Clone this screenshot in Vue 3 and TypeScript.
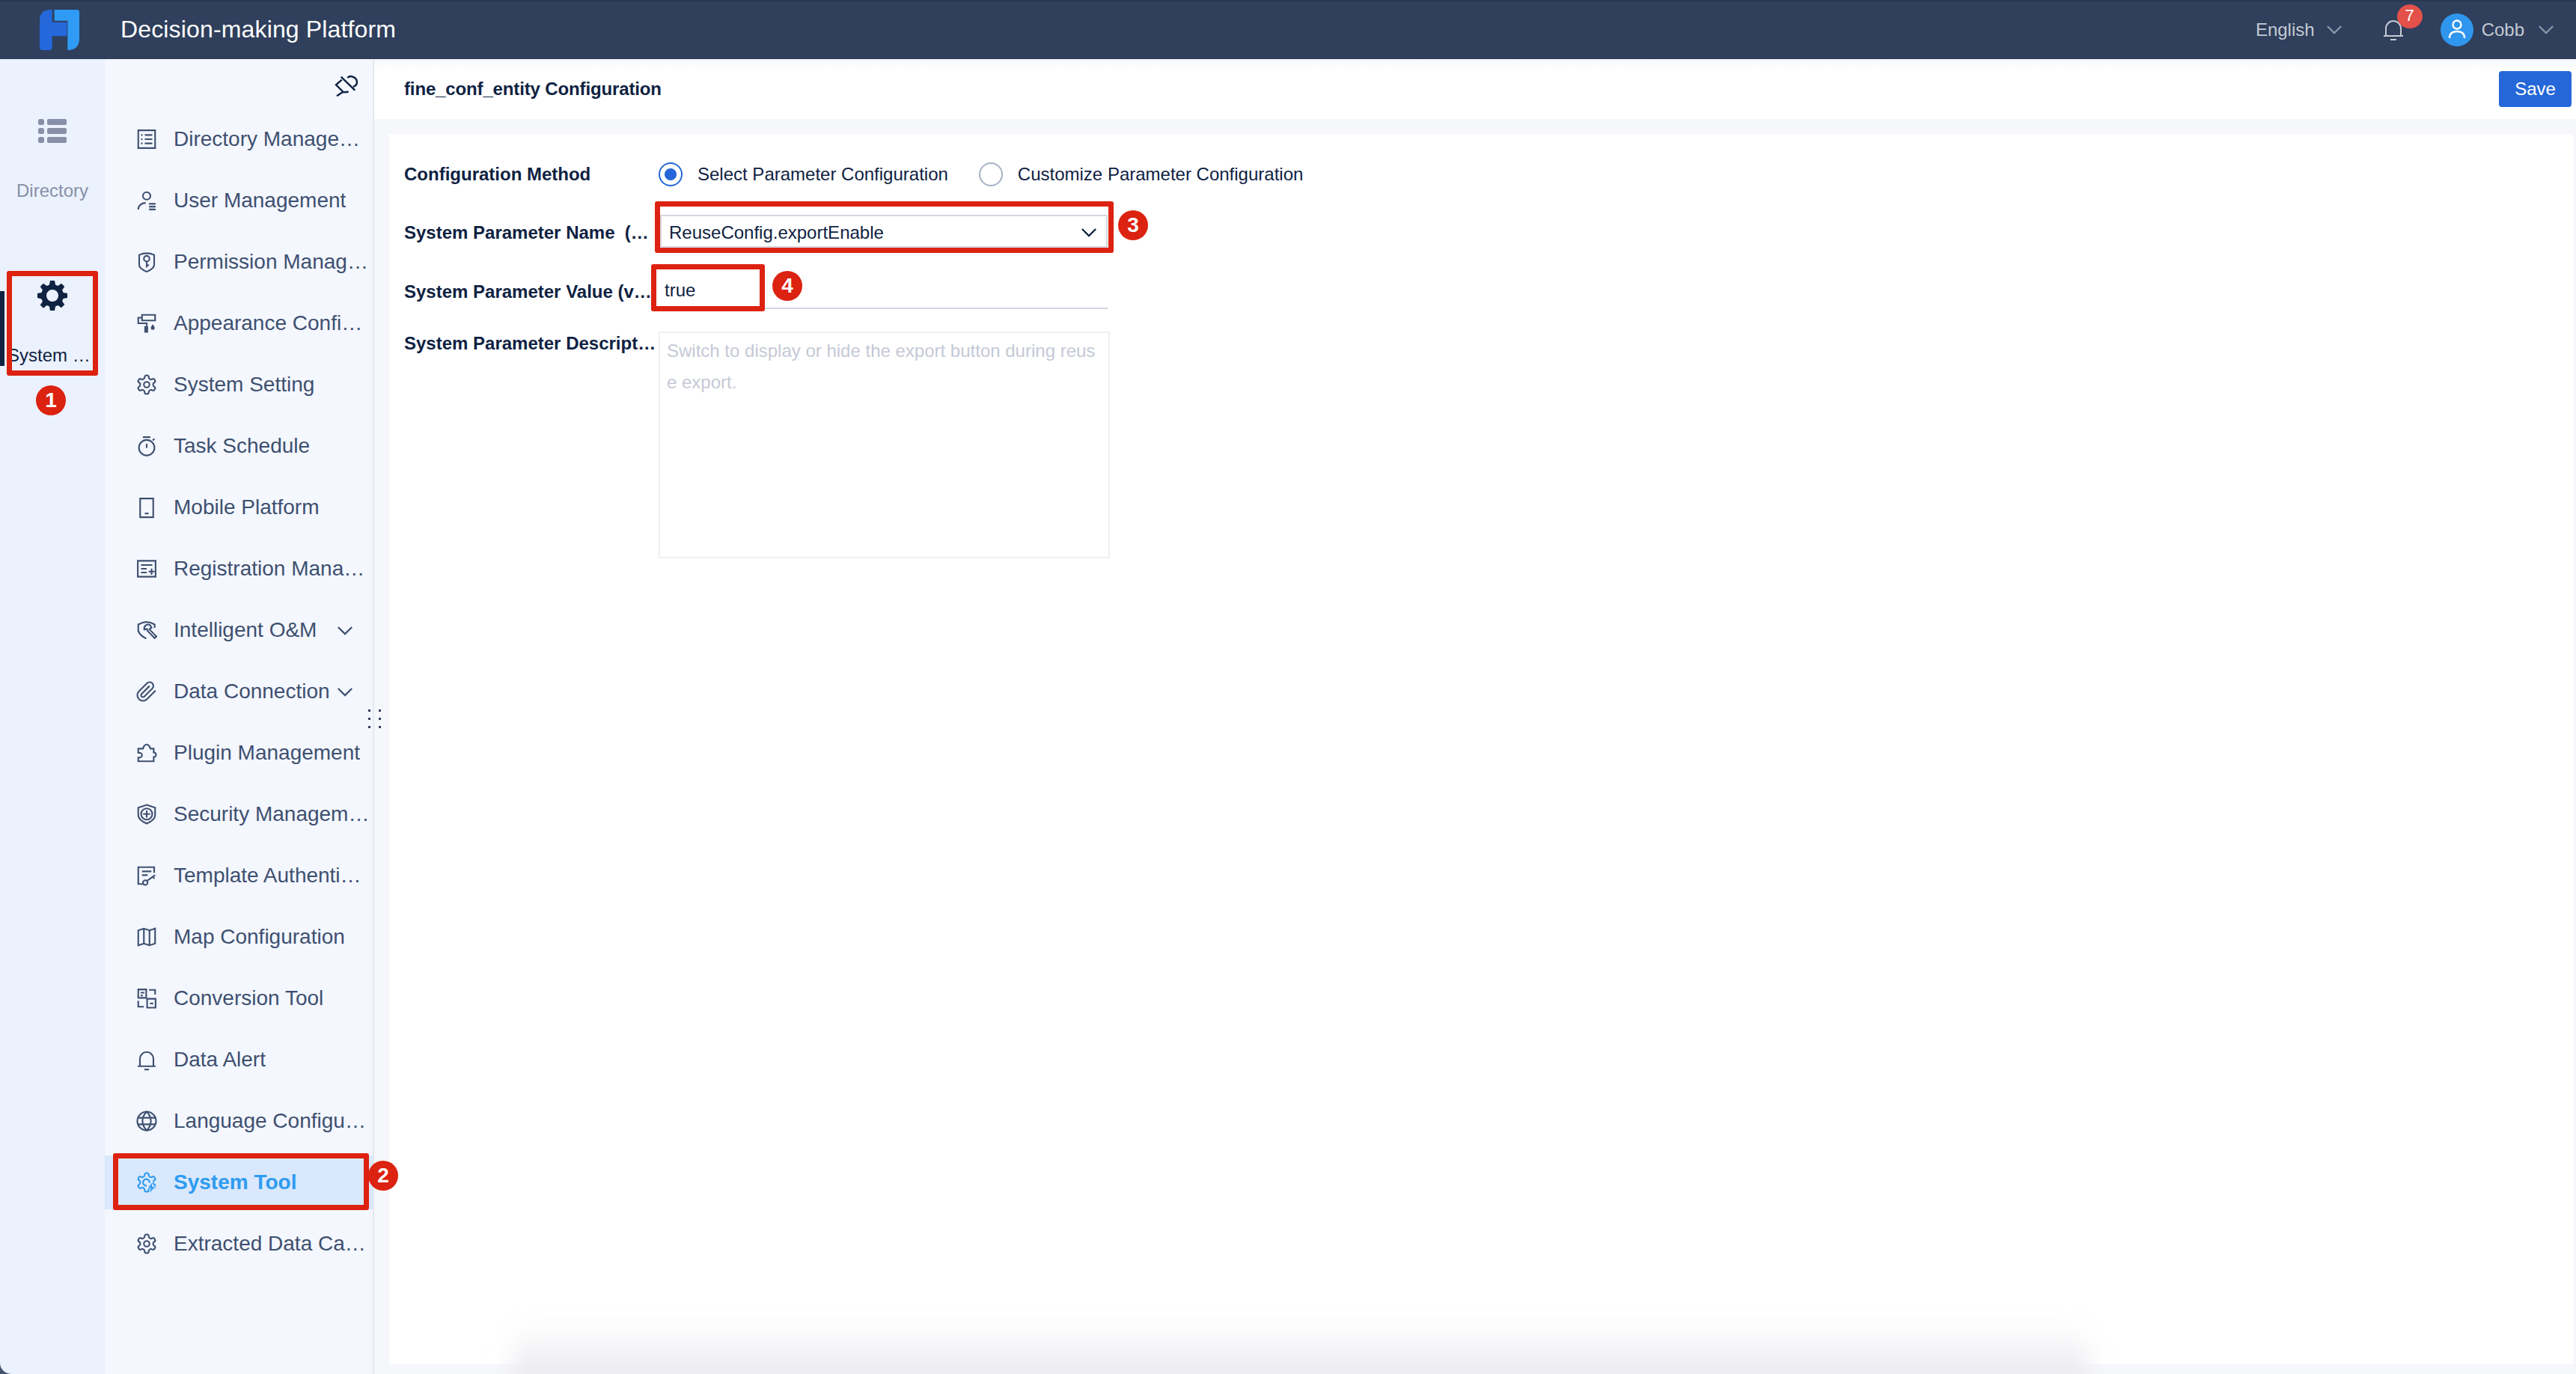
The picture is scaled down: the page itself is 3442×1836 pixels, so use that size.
<script setup lang="ts">
interface NavItem {
    label: string;
    paths: string[];
    solid?: string;
    chevron?: boolean;
    active?: boolean;
}

const gear =
    'M12.22 2h-.44a2 2 0 0 0-2 2v.18a2 2 0 0 1-1 1.73l-.43.25a2 2 0 0 1-2 0l-.15-.08a2 2 0 0 0-2.73.73l-.22.38a2 2 0 0 0 .73 2.73l.15.1a2 2 0 0 1 1 1.72v.51a2 2 0 0 1-1 1.74l-.15.09a2 2 0 0 0-.73 2.73l.22.38a2 2 0 0 0 2.73.73l.15-.08a2 2 0 0 1 2 0l.43.25a2 2 0 0 1 1 1.73V20a2 2 0 0 0 2 2h.44a2 2 0 0 0 2-2v-.18a2 2 0 0 1 1-1.73l.43-.25a2 2 0 0 1 2 0l.15.08a2 2 0 0 0 2.73-.73l.22-.39a2 2 0 0 0-.73-2.73l-.15-.08a2 2 0 0 1-1-1.74v-.5a2 2 0 0 1 1-1.74l.15-.09a2 2 0 0 0 .73-2.73l-.22-.38a2 2 0 0 0-2.73-.73l-.15.08a2 2 0 0 1-2 0l-.43-.25a2 2 0 0 1-1-1.73V4a2 2 0 0 0-2-2z';
const gearHole = 'M12 9a3 3 0 1 0 0 6 3 3 0 0 0 0-6z';

const navItems: NavItem[] = [
    {
        label: 'Directory Management',
        paths: ['M3 2.5h18v19H3z', 'M10 7.5h8M10 12h8M10 16.5h8M6 7.5h1.6M6 12h1.6M6 16.5h1.6'],
    },
    {
        label: 'User Management',
        paths: ['M12 3a4 4 0 1 0 0 8 4 4 0 0 0 0-8z', 'M3 21.5C3 17 7 14.5 11 14.5', 'M14.5 15.5h7M14.5 18.5h7M14.5 21.5h7'],
    },
    {
        label: 'Permission Management',
        paths: ['M4 4.5Q12 1 20 4.5V15Q20 19 12 22.5 4 19 4 15z', 'M12 5.5a3 3 0 1 0 0 6 3 3 0 0 0 0-6zM12 11.5V18M12 15.5h2.5'],
    },
    {
        label: 'Appearance Configuration',
        paths: ['M7 3h14v6H7zM7 6H3v6h9v3'],
        solid: 'M9.5 15h4v7h-4zM18.5 13c-1.5 2-2 3-2 4a2 2 0 0 0 4 0c0-1-.5-2-2-4z',
    },
    { label: 'System Setting', paths: [gear, gearHole] },
    {
        label: 'Task Schedule',
        paths: ['M12 5.5a8.3 8.3 0 1 0 0 16.6 8.3 8.3 0 0 0 0-16.6z', 'M8 2.5h8M12 9.5V14M18.5 6l1.8-1.8'],
    },
    { label: 'Mobile Platform', paths: ['M5 2.5h14v20H5z', 'M10 18.5h4'] },
    {
        label: 'Registration Management',
        paths: ['M2.5 3.5h19v17h-19z', 'M6 8h12M6 12h6M6 16h6M14 15h6.5M17.2 11.7v6.6'],
    },
    {
        label: 'Intelligent O&M',
        chevron: true,
        paths: [
            'M20.5 9.5V6Q12 .5 3 6v7q2 5 8.5 8',
            'M15.5 6.5a4.2 4.2 0 0 0-6 4.8l2.8-.6.8 2.2 7.4 7.6 1.8-1.8-7.4-7.6 2.3-1.8z',
        ],
    },
    {
        label: 'Data Connection',
        chevron: true,
        paths: ['m21.44 11.05-9.19 9.19a6 6 0 0 1-8.49-8.49l8.57-8.57A4 4 0 1 1 18 8.84l-8.59 8.57a2 2 0 0 1-2.83-2.83l8.49-8.48'],
    },
    {
        label: 'Plugin Management',
        paths: ['M3 7.5h5L9 5Q12 1 15 5l1 2.5h3.5v4a2.5 2.5 0 0 1 0 5V21H3v-4h1.5a2.5 2.5 0 0 0 0-5H3z'],
    },
    {
        label: 'Security Management',
        paths: ['M12 2l9 3v8q0 5-9 9-9-4-9-9V5z', 'M12 8v7.5M8.2 11.8h7.6M12 5.8a6 6 0 1 0 0 12 6 6 0 0 0 0-12z'],
    },
    {
        label: 'Template Authentication',
        paths: ['M20 9V3H3v18h5', 'M7 7.5h10M7 11.5h6', 'M10.5 17a2.5 2.5 0 1 0 0 5 2.5 2.5 0 0 0 0-5zM12.5 17.5l8.5-6M18.5 13.3l1.8 2'],
    },
    { label: 'Map Configuration', paths: ['M3 5l6-2 6 2 6-2v16l-6 2-6-2-6 2z', 'M9 3v16M15 5v16'] },
    {
        label: 'Conversion Tool',
        paths: ['M3 2.5h8.5v9H3z', 'M5.5 6h4M5.5 9H8', 'M14.5 3H21v5M3 14.5V21h6', 'M12.5 12.5h9V22h-9z', 'M15.500 17.5H19'],
    },
    { label: 'Data Alert', paths: ['M2.5 19h19M4.8 19v-8a7.2 7.2 0 0 1 14.4 0v8', 'M9.5 22.5h5'] },
    {
        label: 'Language Configuration',
        paths: ['M12 2a10 10 0 1 0 0 20 10 10 0 0 0 0-20z', 'M12 2c-6 6-6 14 0 20 6-6 6-14 0-20zM2.5 8.5h19M2.5 15.5h19'],
    },
    {
        label: 'System Tool',
        active: true,
        paths: [gear, 'M15 12.5a3.5 3.5 0 1 0-3 3'],
        solid: 'M18 12l-4.5 6h3l-1 5 5-6.5h-3z',
    },
    { label: 'Extracted Data Cache', paths: [gear, gearHole] },
];
</script>

<template>
    <div class="page">
        <header class="top">
            <svg class="logo" viewBox="0 0 56 57">
                <path fill="#2468dc" d="M17 1v17h20v19H17v15q0 4-4 4H4q-4 0-4-4V16Q0 1 15 1z" />
                <path fill="#2f9bf5" d="M20 1h31q3 0 3 3v36q0 16-16 16V16H20z" />
            </svg>
            <span class="title">Decision-making Platform</span>
            <div class="top-right">
                <span class="lang">English</span>
                <svg class="top-chev" viewBox="0 0 24 14"><path d="M2 2l10 10L22 2" /></svg>
                <div class="bell">
                    <svg viewBox="0 0 28 30">
                        <path d="M1 23h26M4 23V13a10 10 0 0 1 20 0v10" />
                        <path d="M10 28h8" />
                    </svg>
                    <span class="bell-count">7</span>
                </div>
                <svg class="avatar" viewBox="0 0 44 44">
                    <circle cx="22" cy="22" r="22" fill="#2f96ee" />
                    <circle cx="22" cy="15" r="5.5" />
                    <path d="M12 33c0-6 4-9 10-9s10 3 10 9" />
                </svg>
                <span class="user">Cobb</span>
                <svg class="top-chev user-chev" viewBox="0 0 24 14"><path d="M2 2l10 10L22 2" /></svg>
            </div>
        </header>

        <div class="body">
            <aside class="rail">
                <div class="rail-item">
                    <svg class="rail-icon" viewBox="0 0 38 32">
                        <rect x="0" y="0" width="8" height="8" rx="2.5" fill="#8790a8" />
                        <rect x="12" y="0" width="26" height="8" rx="2" fill="#8790a8" />
                        <rect x="0" y="12" width="8" height="8" rx="2.5" fill="#8790a8" />
                        <rect x="12" y="12" width="26" height="8" rx="2" fill="#8790a8" />
                        <rect x="0" y="24" width="8" height="8" rx="2.5" fill="#8790a8" />
                        <rect x="12" y="24" width="26" height="8" rx="2" fill="#8790a8" />
                    </svg>
                    <span class="rail-label">Directory</span>
                </div>
                <div class="rail-item rail-active">
                    <i class="rail-bar"></i>
                    <svg class="rail-icon" viewBox="0 0 40 40">
                        <path
                            fill="#0f2242"
                            fill-rule="evenodd"
                            d="M17 0h6l1 5.5 3.5 1.5 4.5-3.2 4.3 4.3-3.200 4.400 1.500 3.500 5.700 1v6l-5.700 1-1.500 3.500 3.200 4.500-4.300 4.300-4.500-3.200-3.500 1.500-1 5.900h-6l-1-5.900-3.500-1.500L8 36.800 3.700 32.500 6.900 28l-1.500-3.500L0 23v-6l5.400-1 1.500-3.500L3.700 8.100 8 3.800 12.500 7 16 5.500zM20 12a8 8 0 1 0 0 16 8 8 0 0 0 0-16z"
                        />
                    </svg>
                    <span class="rail-label">System Management</span>
                </div>
            </aside>

            <nav class="nav">
                <div class="pin-row">
                    <svg class="pin" viewBox="0 0 31 31">
                        <path
                            d="M9.7 6.7L2 13.3 12 23.3 18.7 22.7M11 23L3 28.300M8.7 2.7L27.3 20.7M17.3 4C21 0 30 3 30 10 30 14 27 15 25 16"
                        />
                    </svg>
                </div>
                <div
                    v-for="item in navItems"
                    :key="item.label"
                    class="nav-item"
                    :class="{ 'nav-active': item.active }"
                >
                    <svg class="nav-icon" viewBox="0 0 24 24">
                        <path v-for="d in item.paths" :key="d" :d="d" />
                        <path v-if="item.solid" class="nav-solid" :d="item.solid" />
                    </svg>
                    <span class="nav-label">{{ item.label }}</span>
                    <svg v-if="item.chevron" class="nav-chev" viewBox="0 0 24 14">
                        <path d="M2 2l10 10L22 2" />
                    </svg>
                </div>
                <div class="drag">
                    <i v-for="n in 6" :key="n"></i>
                </div>
            </nav>

            <main class="main">
                <div class="bar">
                    <span class="bar-title">fine_conf_entity Configuration</span>
                    <button class="save">Save</button>
                </div>
                <section class="card">
                    <div class="row row-method">
                        <label class="field-label">Configuration Method</label>
                        <div class="radios">
                            <span class="radio radio-on"></span>
                            <span class="radio-text">Select Parameter Configuration</span>
                            <span class="radio"></span>
                            <span class="radio-text">Customize Parameter Configuration</span>
                        </div>
                    </div>
                    <div class="row row-name">
                        <label class="field-label">System Parameter Name&nbsp; (key)</label>
                        <div class="select">
                            <span>ReuseConfig.exportEnable</span>
                            <svg class="select-chev" viewBox="0 0 24 14"><path d="M2 2l10 10L22 2" /></svg>
                        </div>
                    </div>
                    <div class="row row-value">
                        <label class="field-label">System Parameter Value (value)</label>
                        <div class="input">true</div>
                    </div>
                    <div class="row row-desc">
                        <label class="field-label">System Parameter Description (description)</label>
                        <div class="textarea">
                            Switch to display or hide the export button during reuse export.
                        </div>
                    </div>
                </section>
                <div class="bottom-shadow"></div>
            </main>
        </div>

        <div class="mark mark-1"></div>
        <div class="mark mark-2"></div>
        <div class="mark mark-3"></div>
        <div class="mark mark-4"></div>
        <span class="step step-1">1</span>
        <span class="step step-2">2</span>
        <span class="step step-3">3</span>
        <span class="step step-4">4</span>
    </div>
</template>

<style>
html,
body {
    margin: 0;
    background: #f4f7fe;
    overflow: hidden;
}
</style>

<style scoped>
.page {
    position: relative;
    display: flex;
    flex-direction: column;
    width: 3442px;
    height: 1836px;
    overflow: hidden;
    font-family: 'Liberation Sans', Arial, sans-serif;
    color: #0f2242;
}
.top {
    display: flex;
    align-items: center;
    flex: none;
    height: 79px;
    padding: 0 29px 2px 53px;
    box-sizing: border-box;
    background: #2f3f5c;
    border-top: 2px solid #273650;
}
.logo {
    width: 55px;
    height: 56px;
}
.title {
    margin-left: 53px;
    font-size: 32px;
    letter-spacing: 0.15px;
    color: #fff;
}
.top-right {
    display: flex;
    align-items: center;
    margin-left: auto;
    font-size: 24px;
    color: #c5cad3;
}
.top-chev {
    width: 22px;
    height: 13px;
    margin-left: 15px;
    fill: none;
    stroke: #8d97a8;
    stroke-width: 2.4;
}
.bell {
    position: relative;
    width: 28px;
    height: 30px;
    margin-left: 54px;
}
.bell svg {
    display: block;
    width: 28px;
    height: 30px;
    fill: none;
    stroke: #c5cad3;
    stroke-width: 2;
}
.bell-count {
    position: absolute;
    top: -19px;
    left: 19px;
    width: 34px;
    height: 32px;
    border-radius: 50%;
    background: #e4514b;
    color: #fff;
    font-size: 22px;
    line-height: 30px;
    text-align: center;
}
.avatar {
    width: 44px;
    height: 44px;
    margin-left: 49px;
    fill: none;
    stroke: #fff;
    stroke-width: 2.4;
}
.avatar circle:first-child {
    stroke: none;
}
.user {
    margin-left: 11px;
}
.user-chev {
    margin-left: 18px;
}

.body {
    display: flex;
    flex: 1;
    min-height: 0;
    background: #44546f;
}
.rail {
    flex: none;
    width: 140px;
    padding-top: 80px;
    box-sizing: border-box;
    border-bottom-left-radius: 15px;
    background: #ebf1fd;
}
.rail-item {
    position: relative;
    display: flex;
    flex-direction: column;
    align-items: center;
    height: 180px;
    margin-bottom: 36px;
    font-size: 24px;
    color: #8790a8;
}
.rail-icon {
    width: 38px;
    height: 32px;
    margin-bottom: 44px;
}
.rail-active {
    color: #0f2242;
}
.rail-active .rail-icon {
    width: 40px;
    height: 40px;
    margin-bottom: 40px;
}
.rail-bar {
    position: absolute;
    top: 14px;
    left: 0;
    width: 6px;
    height: 100px;
    background: #0f2242;
}
.rail-label {
    width: 120px;
    line-height: 40px;
    text-align: center;
    white-space: nowrap;
    overflow: hidden;
    text-overflow: ellipsis;
}

.nav {
    position: relative;
    flex: none;
    width: 360px;
    box-sizing: border-box;
    border-right: 2px solid #e4e8f0;
    background: #f4f7fe;
}
.pin-row {
    display: flex;
    justify-content: flex-end;
    align-items: flex-start;
    height: 71px;
    padding: 21px 20px 0 0;
    box-sizing: border-box;
}
.pin {
    width: 31px;
    height: 31px;
    fill: none;
    stroke: #0f2242;
    stroke-width: 2.4;
}
.nav-item {
    display: flex;
    align-items: center;
    height: 72px;
    margin-bottom: 10px;
    padding: 0 3px 0 41px;
    font-size: 28px;
    color: #3e5070;
}
.nav-icon {
    flex: none;
    width: 30px;
    height: 30px;
    margin-right: 21px;
    fill: none;
    stroke: currentColor;
    stroke-width: 1.7;
}
.nav-solid {
    fill: currentColor;
    stroke: none;
}
.nav-label {
    white-space: nowrap;
    overflow: hidden;
    text-overflow: ellipsis;
}
.nav-chev {
    flex: none;
    width: 22px;
    height: 13px;
    margin-left: auto;
    margin-right: 23px;
    fill: none;
    stroke: currentColor;
    stroke-width: 2.4;
}
.nav-active {
    background: #d9e8fc;
    color: #2f9bf0;
    font-weight: 700;
}
.nav-active .nav-solid {
    stroke: #d9e8fc;
    stroke-width: 1.2;
    paint-order: stroke;
}
.drag {
    position: absolute;
    z-index: 1;
    top: 869px;
    left: 352px;
    display: grid;
    grid-template-columns: 3px 3px;
    grid-auto-rows: 3px;
    gap: 8px 11px;
}
.drag i {
    background: #33415c;
}

.main {
    position: relative;
    display: flex;
    flex-direction: column;
    flex: 1;
    min-width: 0;
    background: #f6f7fb;
}
.bar {
    display: flex;
    align-items: center;
    justify-content: space-between;
    flex: none;
    height: 80px;
    padding: 0 6px 0 40px;
    box-sizing: border-box;
    background: linear-gradient(#f5f6fa, #fff 14px);
}
.bar-title {
    font-size: 24px;
    font-weight: 700;
    letter-spacing: -0.14px;
}
.save {
    width: 97px;
    height: 48px;
    padding: 0;
    border: none;
    border-radius: 4px;
    background: #2567d9;
    color: #fff;
    font-family: inherit;
    font-size: 24px;
}
.card {
    flex: 1;
    margin: 20px 4px 13px 20px;
    padding: 38px 0 0 20px;
    background: #fff;
}
.row {
    display: flex;
    font-size: 24px;
}
.field-label {
    flex: none;
    width: 340px;
    font-weight: 700;
    white-space: nowrap;
    overflow: hidden;
    text-overflow: ellipsis;
}
.row-method {
    align-items: center;
    height: 32px;
}
.radios {
    display: flex;
    align-items: center;
}
.radio {
    flex: none;
    width: 32px;
    height: 32px;
    box-sizing: border-box;
    border: 2px solid #a6b1c4;
    border-radius: 50%;
}
.radio-on {
    border-color: #2567d9;
    background: radial-gradient(circle, #2567d9 0 7.5px, #fff 8.5px);
}
.radio-text {
    margin-left: 20px;
    margin-right: 41px;
}
.row-name {
    align-items: center;
    height: 44px;
    margin-top: 38px;
}
.row-name .field-label {
    padding-top: 4px;
}
.select {
    display: flex;
    align-items: center;
    justify-content: space-between;
    width: 598px;
    height: 44px;
    margin-left: 2px;
    padding: 3px 12px 0 10px;
    box-sizing: border-box;
    border: 2px solid #d5d6e0;
}
.select-chev {
    width: 22px;
    height: 13px;
    fill: none;
    stroke: #0f2242;
    stroke-width: 2.4;
}
.row-value {
    align-items: center;
    height: 46px;
    margin-top: 36px;
}
.input {
    width: 598px;
    height: 46px;
    margin-left: 2px;
    padding-left: 6px;
    box-sizing: border-box;
    border-bottom: 2px solid #d5d6e0;
    line-height: 42px;
}
.row-desc {
    margin-top: 30px;
}
.row-desc .field-label {
    line-height: 32px;
}
.textarea {
    width: 603px;
    height: 303px;
    padding: 3px 9px;
    box-sizing: border-box;
    border: 2px solid #eef0f2;
    color: #c5c9d6;
    line-height: 42px;
    word-break: break-all;
}
.bottom-shadow {
    position: absolute;
    left: 185px;
    bottom: -10px;
    width: 2105px;
    height: 80px;
    background: linear-gradient(to top, #dfe0e7, #ecedf1 25%, #f8f8fa 65%, transparent);
    filter: blur(16px);
    pointer-events: none;
}

.mark {
    position: absolute;
    box-sizing: border-box;
    border: 7px solid #dd2211;
    border-radius: 3px;
}
.mark-1 {
    top: 362px;
    left: 9px;
    width: 122px;
    height: 140px;
}
.mark-2 {
    top: 1541px;
    left: 151px;
    width: 342px;
    height: 76px;
}
.mark-3 {
    top: 269px;
    left: 875px;
    width: 613px;
    height: 69px;
}
.mark-4 {
    top: 353px;
    left: 870px;
    width: 152px;
    height: 63px;
}
.step {
    position: absolute;
    width: 40px;
    height: 40px;
    border-radius: 50%;
    background: #dc2210;
    color: #fff;
    font-size: 28px;
    font-weight: 700;
    line-height: 40px;
    text-align: center;
}
.step-1 {
    top: 515px;
    left: 48px;
}
.step-2 {
    top: 1551px;
    left: 492px;
}
.step-3 {
    top: 281px;
    left: 1494px;
}
.step-4 {
    top: 362px;
    left: 1032px;
}
</style>
